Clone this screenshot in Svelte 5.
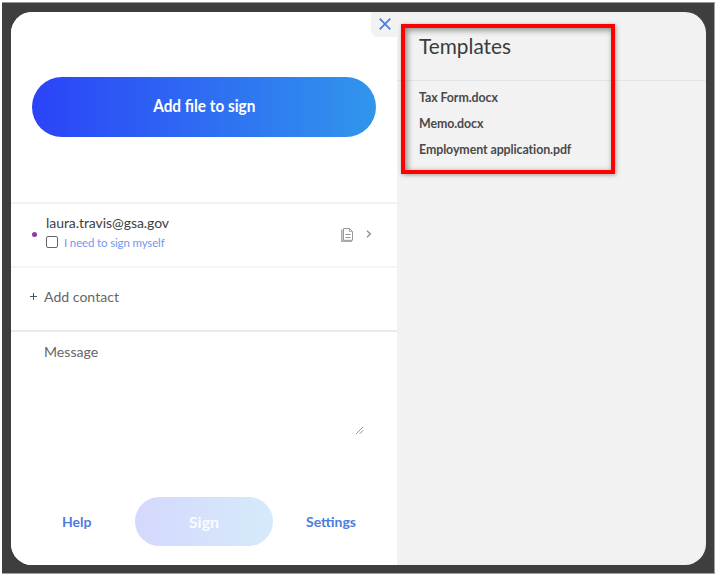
<script>
  const templates = ['Tax Form.docx', 'Memo.docx', 'Employment application.pdf'];
  let selfSign = $state(false);
</script>

<div class="backdrop">
  <main class="dialog">
    <section class="panel">
      <div class="upload">
        <button class="add-file"><span>Add file to sign</span></button>
      </div>
      <div class="contact">
        <i class="dot"></i>
        <div class="person">
          <div class="email"><span>laura.travis@gsa.gov</span></div>
          <label>
            <input type="checkbox" bind:checked={selfSign} />
            <span class="self">I need to sign myself</span>
          </label>
        </div>
        <svg class="doc" width="12" height="14" viewBox="0 0 12 14" fill="none">
          <path d="M.8 1.5V13.2H11" stroke="#aaa" stroke-width="1.6" />
          <path d="M2.5 .5H8.5L11.5 3.5V12.3H2.5Z" stroke="#999" fill="#fff" />
          <path d="M8.5 .5V3.5H11.5" stroke="#aaa" />
          <path d="M4.5 6.5H9.5M4.5 9.5H9.5" stroke="#909090" />
        </svg>
        <svg class="chevron" width="6" height="8" viewBox="0 0 6 8" fill="none">
          <path d="M1 0.8L4.3 4L1 7.2" stroke="#8c8c8c" stroke-width="1.3" />
        </svg>
      </div>
      <div class="add-contact">
        <svg width="7" height="7" viewBox="0 0 7 7"><path d="M3.5 0V7M0 3.5H7" stroke="#555" /></svg>
        <span>Add contact</span>
      </div>
      <div class="message">
        <span>Message</span>
        <svg width="9" height="9" viewBox="0 0 9 9"><path d="M1 8L8 1M4.5 8L8 4.5" stroke="#777" stroke-width=".8" /></svg>
      </div>
      <footer>
        <a class="help" href="#help">Help</a>
        <button class="sign"><span>Sign</span></button>
        <a class="settings" href="#settings">Settings</a>
      </footer>
    </section>
    <aside>
      <button class="close" aria-label="Close">
        <svg width="12" height="12" viewBox="0 0 12 12"><path d="M.7 .7L11.3 11.3M11.3 .7L.7 11.3" stroke="#4c7fe0" stroke-width="1.8" /></svg>
      </button>
      <h1><span>Templates</span></h1>
      <ul>
        {#each templates as name}
          <li><span>{name}</span></li>
        {/each}
      </ul>
      <div class="highlight"></div>
    </aside>
  </main>
</div>

<style>
  :global(body) { margin: 0; background: #fff; }
  * { box-sizing: border-box; }
  .backdrop {
    width: 713px; height: 572px; margin-left: 2px;
    border-top: 1px solid #969696; border-right: 1px solid #a0a0a0; border-bottom: 1px solid #a0a0a0;
    background: #3e3e3f; padding: 9px 0 0 9px;
    font-family: Lato, "Liberation Sans", sans-serif;
  }
  :global(#app) { padding-top: 2px; }
  .dialog { width: 695px; height: 553px; display: flex; border-radius: 21px; background: #f2f2f2; }
  .panel { width: 386px; background: #fff; border-radius: 21px 0 0 21px; }
  button { border: 0; padding: 0; font-family: inherit; }
  .upload { height: 190px; padding: 65px 0 0 21px; }
  .add-file {
    display: block; width: 344px; height: 60px; border-radius: 30px;
    background: linear-gradient(90deg, #2b43f8, #3196ec);
    color: #fff; font-size: 16.6px; font-weight: 700; padding-bottom: 2px;
  }
  .add-file span { display: inline-block; transform: scaleX(.925); }
  .contact { height: 64px; border-top: 2px solid #f2f2f2; display: flex; align-items: center; padding: 0 0 1px 21px; }
  .dot { width: 5px; height: 5px; border-radius: 50%; background: #8e3aa5; }
  .person { width: 294px; padding-left: 9px; }
  .email { font-size: 14px; line-height: 20px; color: #404040; margin-top: -5px; letter-spacing: -.06px; }
  label { display: flex; align-items: center; height: 18px; }
  input { appearance: none; width: 12px; height: 12px; margin: 0 6px 0 0; border: 1px solid #666; border-radius: 2px; }
  .self { font-size: 11.5px; color: #7398ef; letter-spacing: -.15px; }
  .doc { margin-left: 10px; }
  .chevron { margin-left: 13px; margin-top: -1px; }
  .add-contact {
    height: 64px; border-top: 2px solid #f5f5f5; display: flex; align-items: center;
    padding: 0 0 6px 19px; gap: 7px; font-size: 14.1px; color: #666;
  }
  .message {
    height: 155px; border-top: 2px solid #eaeaea; padding: 10px 33px 50px 33px;
    display: flex; justify-content: space-between; font-size: 14.1px; line-height: 20px; color: #666;
  }
  .message svg { align-self: flex-end; }
  footer { display: flex; align-items: center; height: 73px; }
  footer a { color: #4d7be2; text-decoration: none; font-size: 14px; font-weight: 700; padding-bottom: 1px; }
  .help { width: 124px; padding-left: 51px; }
  .sign {
    width: 138px; height: 49px; border-radius: 25px;
    background: linear-gradient(90deg, #d4d8fd, #d6eafa);
    color: #fafbff; font-size: 16px; font-weight: 700; padding-bottom: 1px;
  }
  .settings { margin-left: 33px; }
  aside { position: relative; width: 309px; }
  .close {
    position: absolute; left: -26px; top: 0; width: 26px; height: 25px;
    background: #f2f2f2; border-radius: 0 0 0 7px; display: grid; place-items: center;
    padding: 0 0 2px 2px;
  }
  h1 { margin: 0; height: 69px; padding: 21px 0 0 22px; border-bottom: 1px solid #e5e5e5; font-size: 20.8px; line-height: 26px; font-weight: 400; color: #3c3c3c; }
  ul { list-style: none; margin: 0; padding: 4px 0 0 22px; }
  li { height: 26px; line-height: 26px; font-size: 12.4px; font-weight: 700; color: #4a4a4a; letter-spacing: -.09px; }
  .highlight {
    position: absolute; left: 4px; top: 12px; width: 214px; height: 150px; border: 4px solid #f00;
    box-shadow: 1px 1px 4px rgba(0,0,0,.35), inset 2px 2px 6px rgba(0,0,0,.45);
  }
</style>
